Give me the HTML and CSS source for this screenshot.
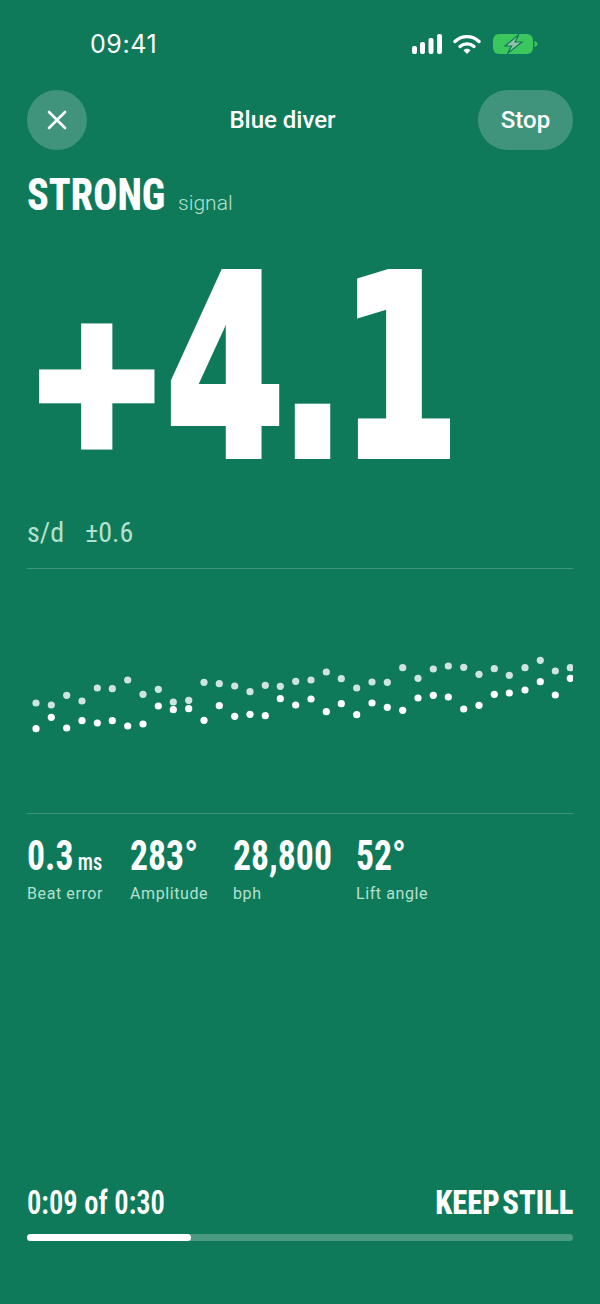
FILE: index.html
```html
<!DOCTYPE html>
<html>
<head>
    <title>Timing</title>
    <link rel="stylesheet" href="styles.css">
</head>
<body>
    <div class="screen">
        <div class="status">
            <span class="clock">09:41</span>
            <div class="status-icons">
                <svg class="signal" width="30" height="20" viewBox="0 0 30 20">
                    <rect x="0" y="12" width="5" height="8" rx="2" fill="#fff"/>
                    <rect x="8" y="8" width="5" height="12" rx="2" fill="#fff"/>
                    <rect x="16.500" y="4" width="5" height="16" rx="2" fill="#fff"/>
                    <rect x="25" y="0" width="5" height="20" rx="2" fill="#fff"/>
                </svg>
                <svg class="wifi" width="28" height="20" viewBox="0 0 28 20">
                    <path d="M2 7.500C9 1 19 1 26 7.500" fill="none" stroke="#fff" stroke-width="3.400" stroke-linecap="round"/>
                    <path d="M7 12.500C11 9 17 9 21 12.500" fill="none" stroke="#fff" stroke-width="3.400" stroke-linecap="round"/>
                    <path d="M10.500 16.200C12.500 14.200 15.500 14.200 17.500 16.200L14 20Z" fill="#fff"/>
                </svg>
                <svg class="battery" width="45" height="20" viewBox="0 0 45 20">
                    <rect x="0" y="0" width="40" height="20" rx="6" fill="#3cc65e"/>
                    <path d="M41.500 7v6c2-.5 3-1.700 3-3s-1-2.500-3-3z" fill="#3cc65e"/>
                    <path d="M26 0.500L12 12H18.500L14.500 19.500L29 8H22Z" fill="#8fc4a8" stroke="#0f7a5a" stroke-width="1.200"/>
                </svg>
            </div>
        </div>

        <div class="topbar">
            <button class="round-btn">
                <svg width="22" height="22" viewBox="0 0 22 22">
                    <path d="M3 3L19 19M19 3L3 19" stroke="#fff" stroke-width="2.600" stroke-linecap="round"/>
                </svg>
            </button>
            <span class="title">Blue diver</span>
            <button class="stop-btn">Stop</button>
        </div>

        <div class="signal-line">
            <span class="strength">STRONG</span>
            <span class="signal-word">signal</span>
        </div>

        <div class="reading"><span class="sign">+</span>4.1</div>

        <div class="rate">
            <span>s/d</span>
            <span>±0.6</span>
        </div>

        <svg class="chart" width="546" height="244" viewBox="27 569 546 244">
            <g class="dots-top">
                <circle cx="36" cy="703" r="3.600"/><circle cx="51.300" cy="705" r="3.600"/><circle cx="66.700" cy="695.300" r="3.600"/>
                <circle cx="82" cy="701" r="3.600"/><circle cx="97.300" cy="688" r="3.600"/><circle cx="112.300" cy="688.700" r="3.600"/>
                <circle cx="127.700" cy="680" r="3.600"/><circle cx="143" cy="694.300" r="3.600"/><circle cx="158.300" cy="689.300" r="3.600"/>
                <circle cx="173.300" cy="702" r="3.600"/><circle cx="188.700" cy="700.300" r="3.600"/><circle cx="204" cy="682.300" r="3.600"/>
                <circle cx="219.300" cy="683.700" r="3.600"/><circle cx="234.700" cy="686" r="3.600"/><circle cx="250" cy="691.700" r="3.600"/>
                <circle cx="265.300" cy="685.300" r="3.600"/><circle cx="280.300" cy="686.300" r="3.600"/><circle cx="295.700" cy="681.300" r="3.600"/>
                <circle cx="311" cy="680" r="3.600"/><circle cx="326.300" cy="672" r="3.600"/><circle cx="341.300" cy="678.700" r="3.600"/>
                <circle cx="356.700" cy="688" r="3.600"/><circle cx="372" cy="682" r="3.600"/><circle cx="387.300" cy="682.300" r="3.600"/>
                <circle cx="402.700" cy="667.700" r="3.600"/><circle cx="418" cy="678.300" r="3.600"/><circle cx="433.300" cy="669" r="3.600"/>
                <circle cx="448.300" cy="666" r="3.600"/><circle cx="463.700" cy="667.300" r="3.600"/><circle cx="479" cy="674.300" r="3.600"/>
                <circle cx="494.300" cy="668.700" r="3.600"/><circle cx="509.300" cy="675.300" r="3.600"/><circle cx="525" cy="667.700" r="3.600"/>
                <circle cx="540.300" cy="660.300" r="3.600"/><circle cx="555.300" cy="671" r="3.600"/><circle cx="570.300" cy="667.700" r="3.600"/>
            </g>
            <g class="dots-bottom">
                <circle cx="36" cy="728.700" r="3.600"/><circle cx="51.300" cy="717.300" r="3.600"/><circle cx="66.700" cy="728" r="3.600"/>
                <circle cx="82" cy="720.700" r="3.600"/><circle cx="97.300" cy="723" r="3.600"/><circle cx="112.300" cy="720.700" r="3.600"/>
                <circle cx="127.700" cy="726" r="3.600"/><circle cx="143" cy="724" r="3.600"/><circle cx="158.300" cy="706" r="3.600"/>
                <circle cx="173.300" cy="709.700" r="3.600"/><circle cx="188.700" cy="708.700" r="3.600"/><circle cx="204" cy="720.300" r="3.600"/>
                <circle cx="219.300" cy="705.700" r="3.600"/><circle cx="234.700" cy="716.300" r="3.600"/><circle cx="250" cy="714.300" r="3.600"/>
                <circle cx="265.300" cy="715.700" r="3.600"/><circle cx="280.300" cy="698.700" r="3.600"/><circle cx="295.700" cy="705" r="3.600"/>
                <circle cx="311" cy="699" r="3.600"/><circle cx="326.300" cy="711.700" r="3.600"/><circle cx="341.300" cy="703.700" r="3.600"/>
                <circle cx="356.700" cy="714.700" r="3.600"/><circle cx="372" cy="703" r="3.600"/><circle cx="387.300" cy="707.300" r="3.600"/>
                <circle cx="402.700" cy="710.300" r="3.600"/><circle cx="418" cy="698" r="3.600"/><circle cx="433.300" cy="695.300" r="3.600"/>
                <circle cx="448.300" cy="697" r="3.600"/><circle cx="463.700" cy="709" r="3.600"/><circle cx="479" cy="705.300" r="3.600"/>
                <circle cx="494.300" cy="694.300" r="3.600"/><circle cx="509.300" cy="693" r="3.600"/><circle cx="525" cy="690" r="3.600"/>
                <circle cx="540.300" cy="681.700" r="3.600"/><circle cx="555.300" cy="695" r="3.600"/><circle cx="570.300" cy="678.300" r="3.600"/>
            </g>
        </svg>

        <div class="stats">
            <div class="stat">
                <div class="stat-value">0.3<small>ms</small></div>
                <div class="stat-label">Beat error</div>
            </div>
            <div class="stat">
                <div class="stat-value">283°</div>
                <div class="stat-label">Amplitude</div>
            </div>
            <div class="stat">
                <div class="stat-value">28,800</div>
                <div class="stat-label">bph</div>
            </div>
            <div class="stat">
                <div class="stat-value">52°</div>
                <div class="stat-label">Lift angle</div>
            </div>
        </div>

        <div class="footer">
            <div class="footer-row">
                <span class="elapsed">0:09 of 0:30</span>
                <span class="hint">KEEP STILL</span>
            </div>
            <div class="progress">
                <div class="progress-fill" style="width: 30%"></div>
            </div>
        </div>
    </div>
</body>
</html>
```

FILE: styles.css
```css
body {
    margin: 0;
    background-color: #0f7a5a;
    color: white;
    font-family: Roboto, Arial, sans-serif;
}
.screen {
    box-sizing: border-box;
    height: 1304px;
    padding: 0 27px;
    display: flex;
    flex-direction: column;
    overflow: hidden;
}
.status {
    height: 90px;
    display: flex;
    justify-content: space-between;
    box-sizing: border-box;
    padding: 29px 35px 0 63px;
}
.clock {
    font-family: Inter, sans-serif;
    font-size: 25px;
    letter-spacing: 0.6px;
    line-height: 30px;
}
.status-icons {
    display: flex;
    gap: 12px;
    padding-top: 5px;
    align-items: flex-start;
}
.wifi {
    margin-left: -1px;
}
.topbar {
    display: flex;
    justify-content: space-between;
    align-items: center;
    height: 60px;
}
.round-btn {
    width: 60px;
    height: 60px;
    border: none;
    border-radius: 50%;
    padding: 0;
    background-color: rgba(255,255,255,0.2);
    display: flex;
    align-items: center;
    justify-content: center;
}
.title {
    font-size: 24px;
    font-weight: 500;
}
.stop-btn {
    width: 95px;
    height: 60px;
    border: none;
    border-radius: 30px;
    padding: 0;
    background-color: rgba(255,255,255,0.2);
    color: white;
    font-family: inherit;
    font-size: 24px;
    font-weight: 500;
}
.signal-line {
    display: flex;
    align-items: baseline;
    height: 50px;
    line-height: 50px;
    margin-top: 20px;
}
.strength {
    display: inline-block;
    font-stretch: 75%;
    font-weight: 800;
    font-size: 44px;
    transform: scaleX(0.91);
    transform-origin: left center;
    margin-right: -14px;
}
.signal-word {
    margin-left: 13px;
    font-size: 21px;
    font-weight: 300;
    color: #b4e0cf;
}
.reading {
    font-family: "DejaVu Sans", sans-serif;
    font-weight: bold;
    font-size: 250px;
    letter-spacing: -6px;
    line-height: 270px;
    height: 256px;
    margin: 14px 0 0 -3px;
    white-space: nowrap;
    -webkit-text-stroke: 8px white;
    transform: scaleX(0.68);
    transform-origin: left center;
}
.sign {
    display: inline-block;
    font-size: 180px;
    line-height: 1;
    margin-right: 64px;
    -webkit-text-stroke-width: 13px;
    transform: translate(5px, -12px) scaleX(1.35);
    transform-origin: left center;
}
.rate {
    display: flex;
    gap: 21px;
    height: 70px;
    padding-top: 8px;
    line-height: 70px;
    font-stretch: 75%;
    font-size: 28px;
    color: #b4e0cf;
    border-bottom: 1px solid rgba(255,255,255,0.2);
}
.chart {
    display: block;
    flex: none;
}
.dots-top {
    fill: rgba(255,255,255,0.8);
}
.dots-bottom {
    fill: white;
}
.stats {
    display: grid;
    grid-template-columns: 103px 103px 123px auto;
    border-top: 1px solid rgba(255,255,255,0.2);
    padding-top: 17px;
}
.stat-value {
    height: 51px;
    font-stretch: 75%;
    font-weight: 700;
    font-size: 42px;
    line-height: 50px;
    white-space: nowrap;
    transform: scaleX(0.85);
    transform-origin: left center;
}
.stat-value small {
    font-size: 24px;
    font-weight: 500;
    line-height: 1;
    margin-left: 5px;
}
.stat-label {
    font-size: 16px;
    letter-spacing: 0.6px;
    line-height: 24px;
    color: #b4e0cf;
}
.footer {
    margin-top: auto;
    padding-bottom: 63px;
}
.footer-row {
    display: flex;
    justify-content: space-between;
    align-items: baseline;
    line-height: 44px;
}
.elapsed {
    display: inline-block;
    font-stretch: 75%;
    font-size: 34px;
    font-weight: 600;
    transform: scaleX(0.84);
    transform-origin: left center;
}
.hint {
    display: inline-block;
    font-stretch: 75%;
    font-size: 34px;
    font-weight: 800;
    word-spacing: -5px;
    transform: scaleX(0.9);
    transform-origin: right center;
}
.progress {
    height: 7px;
    margin-top: 10px;
    border-radius: 4px;
    background-color: rgba(255,255,255,0.25);
}
.progress-fill {
    height: 100%;
    border-radius: 4px;
    background-color: white;
}
```
